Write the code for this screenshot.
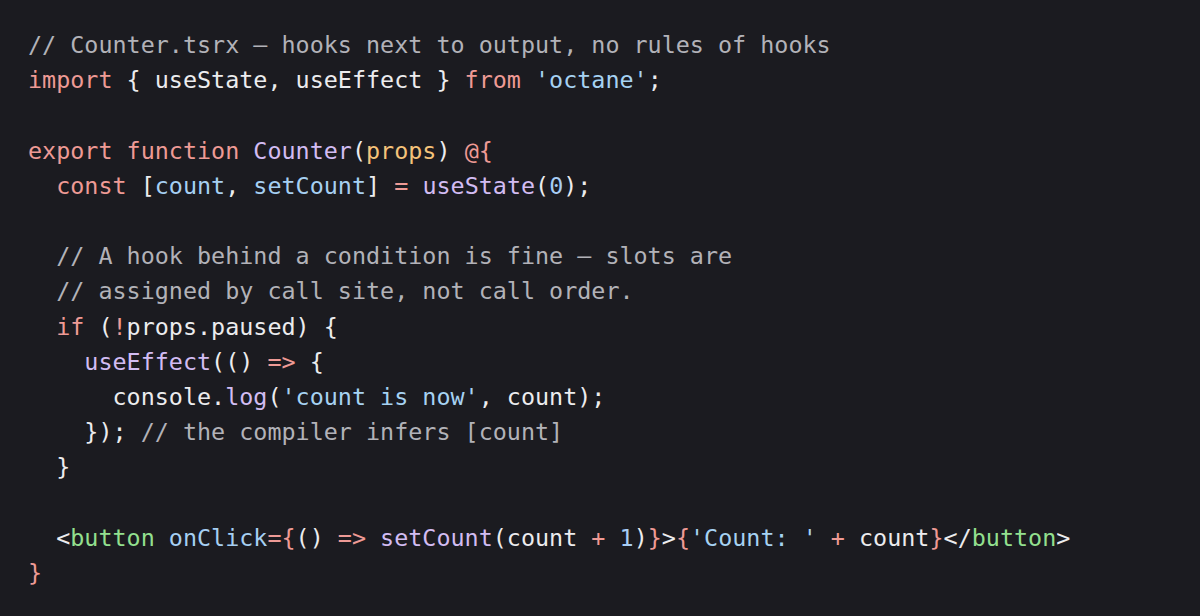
import React from "react";

type Seg = [string, string];

const C = {
  kw: "text-[#ee9a95]",
  str: "text-[#a6d2f2]",
  fn: "text-[#d2bcf2]",
  prop: "text-[#f5c37a]",
  num: "text-[#a8cdf4]",
  tag: "text-[#93e08f]",
  attr: "text-[#a6cff2]",
  com: "text-[#b2b2b8]",
  txt: "text-[#ececee]",
};

const lines: Seg[][] = [
  [["// Counter.tsrx — hooks next to output, no rules of hooks", C.com]],
  [
    ["import", C.kw],
    [" { useState, useEffect } ", C.txt],
    ["from", C.kw],
    [" ", C.txt],
    ["'octane'", C.str],
    [";", C.txt],
  ],
  [],
  [
    ["export", C.kw],
    [" ", C.txt],
    ["function", C.kw],
    [" ", C.txt],
    ["Counter", C.fn],
    ["(", C.txt],
    ["props", C.prop],
    [") ", C.txt],
    ["@{", C.kw],
  ],
  [
    ["  ", C.txt],
    ["const", C.kw],
    [" [", C.txt],
    ["count", C.attr],
    [", ", C.txt],
    ["setCount", C.attr],
    ["] ", C.txt],
    ["=", C.kw],
    [" ", C.txt],
    ["useState", C.fn],
    ["(", C.txt],
    ["0", C.num],
    [");", C.txt],
  ],
  [],
  [["  // A hook behind a condition is fine — slots are", C.com]],
  [["  // assigned by call site, not call order.", C.com]],
  [
    ["  ", C.txt],
    ["if", C.kw],
    [" (", C.txt],
    ["!", C.kw],
    ["props.paused) {", C.txt],
  ],
  [
    ["    ", C.txt],
    ["useEffect", C.fn],
    ["(() ", C.txt],
    ["=>", C.kw],
    [" {", C.txt],
  ],
  [
    ["      console.", C.txt],
    ["log", C.fn],
    ["(", C.txt],
    ["'count is now'", C.str],
    [", count);", C.txt],
  ],
  [
    ["    }); ", C.txt],
    ["// the compiler infers [count]", C.com],
  ],
  [["  }", C.txt]],
  [],
  [
    ["  <", C.txt],
    ["button", C.tag],
    [" ", C.txt],
    ["onClick", C.attr],
    ["={", C.kw],
    ["() ", C.txt],
    ["=>", C.kw],
    [" ", C.txt],
    ["setCount", C.fn],
    ["(count ", C.txt],
    ["+", C.kw],
    [" ", C.txt],
    ["1", C.num],
    [")", C.txt],
    ["}", C.kw],
    [">", C.txt],
    ["{", C.kw],
    ["'Count: '", C.str],
    [" ", C.txt],
    ["+", C.kw],
    [" count", C.txt],
    ["}", C.kw],
    ["</", C.txt],
    ["button", C.tag],
    [">", C.txt],
  ],
  [["}", C.kw]],
];

export default function App() {
  return (
    <div className="w-[1200px] h-[616px] bg-[#1b1b20] overflow-hidden pt-[28px] pl-[28px] font-['DejaVu_Sans_Mono','Liberation_Mono',monospace] text-[23.4px] leading-[35.2px]">
      {lines.map((segs, i) => (
        <div key={i} className="h-[35.2px] whitespace-pre">
          {segs.length === 0
            ? " "
            : segs.map(([t, c], j) => (
                <span key={j} className={c}>
                  {t}
                </span>
              ))}
        </div>
      ))}
    </div>
  );
}
